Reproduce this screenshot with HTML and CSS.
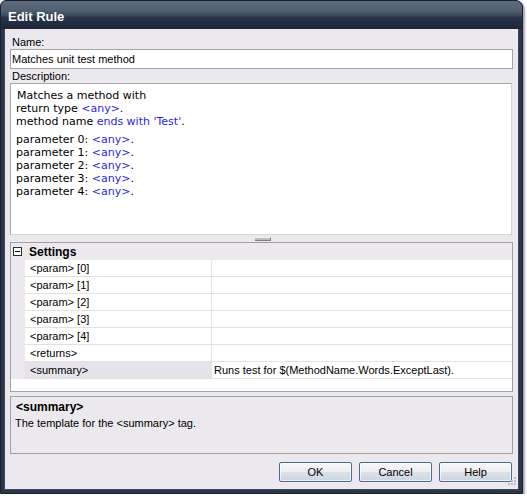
FILE: index.html
```html
<!DOCTYPE html>
<html>
<head>
<meta charset="utf-8">
<link rel="stylesheet" href="styles.css">
</head>
<body>
<div class="window">
  <div class="titlebar"><span class="title">Edit Rule</span></div>
  <div class="client">
    <div class="label">Name:</div>
    <div class="input">Matches unit test method</div>
    <div class="label label-desc">Description:</div>
    <div class="desc">
      <div class="group">
        <div class="first">Matches a method with</div>
        <div>return type <span class="kw">&lt;any&gt;</span>.</div>
        <div>method name <span class="kw">ends with 'Test'</span>.</div>
      </div>
      <div class="group group2">
        <div>parameter 0: <span class="kw">&lt;any&gt;</span>.</div>
        <div>parameter 1: <span class="kw">&lt;any&gt;</span>.</div>
        <div>parameter 2: <span class="kw">&lt;any&gt;</span>.</div>
        <div>parameter 3: <span class="kw">&lt;any&gt;</span>.</div>
        <div>parameter 4: <span class="kw">&lt;any&gt;</span>.</div>
      </div>
    </div>
    <div class="splitter"><div class="grip"></div></div>
    <div class="grid">
      <div class="cat">
        <span class="expander"><span class="minus"></span></span>
        <span class="cat-name">Settings</span>
      </div>
      <div class="row"><div class="margin"></div><div class="name">&lt;param&gt; [0]</div><div class="value"></div></div>
      <div class="row"><div class="margin"></div><div class="name">&lt;param&gt; [1]</div><div class="value"></div></div>
      <div class="row"><div class="margin"></div><div class="name">&lt;param&gt; [2]</div><div class="value"></div></div>
      <div class="row"><div class="margin"></div><div class="name">&lt;param&gt; [3]</div><div class="value"></div></div>
      <div class="row"><div class="margin"></div><div class="name">&lt;param&gt; [4]</div><div class="value"></div></div>
      <div class="row"><div class="margin"></div><div class="name">&lt;returns&gt;</div><div class="value"></div></div>
      <div class="row selected"><div class="margin"></div><div class="name">&lt;summary&gt;</div><div class="value">Runs test for $(MethodName.Words.ExceptLast).</div></div>
    </div>
    <div class="help">
      <div class="help-title">&lt;summary&gt;</div>
      <div class="help-text">The template for the &lt;summary&gt; tag.</div>
    </div>
    <div class="buttons">
      <button class="btn">OK</button>
      <button class="btn">Cancel</button>
      <button class="btn">Help</button>
    </div>
    <svg class="sizegrip" width="10" height="10" viewBox="0 0 10 10">
      <g fill="#bfbdc4">
        <rect x="8" y="0" width="2" height="2"/>
        <rect x="5" y="3" width="2" height="2"/><rect x="8" y="3" width="2" height="2"/>
        <rect x="2" y="6" width="2" height="2"/><rect x="5" y="6" width="2" height="2"/><rect x="8" y="6" width="2" height="2"/>
      </g>
    </svg>
  </div>
</div>
</body>
</html>
```

FILE: styles.css
```css
* { box-sizing: border-box; }
html, body { margin: 0; padding: 0; background: #ffffff; }
body {
  font-family: "Liberation Sans", Arial, sans-serif;
  font-size: 11px;
  color: #000;
}
.window {
  width: 523px;
  height: 494px;
  background: #2b3547;
  border-radius: 6px 7px 0 0;
  display: flex;
  flex-direction: column;
  box-shadow: 2px 2px 2px rgba(60, 60, 70, 0.45);
  border: 1px solid #1a2130;
}
.titlebar {
  height: 28px;
  flex: none;
  border-radius: 5px 6px 0 0;
  background: linear-gradient(#5d6c7c 0%, #506071 35%, #3a4859 52%, #27324a 60%, #1e2739 100%);
  display: flex;
  align-items: center;
  padding-left: 7px;
  padding-top: 2px;
}
.title {
  color: #fff;
  font-weight: bold;
  font-size: 13px;
}
.client {
  position: relative;
  flex: 1;
  margin: 0 3px 3px 3px;
  background: #ebe9ee;
  padding: 6px 5px 0 5px;
  display: flex;
  flex-direction: column;
  border: 1px solid #3e4a5e;
  border-top: none;
}
.label {
  line-height: 14px;
  height: 14px;
  padding-left: 2px;
}
.label-desc { height: 14px; line-height: 13px; padding-top: 1px; }
.input {
  height: 20px;
  background: #fff;
  border: 1px solid #a4a4a4;
  line-height: 18px;
  padding-left: 1px;
}
.desc {
  height: 152px;
  background: #fff;
  border: 1px solid #a9a9a9;
  border-right-color: #d6d6d6;
  border-bottom-color: #d6d6d6;
  padding: 5px 0 0 5px;
  font-family: "DejaVu Sans", Verdana, sans-serif;
  font-size: 11px;
  line-height: 13px;
  margin-right: 1px;
}
.desc .first { padding-left: 1px; }
.group2 { margin-top: 5px; }
.kw { color: #2727e0; }
.splitter {
  height: 7px;
  display: flex;
  justify-content: center;
  align-items: center;
}
.grip {
  width: 16px;
  height: 4px;
  background: #bdbcc2;
  border-top: 1px solid #f4f4f6;
  border-bottom: 1px solid #808080;
  border-right: 1px solid #808080;
  margin-left: 3px;
}
.grid {
  height: 150px;
  background: #fff;
  border: 1px solid #a0a0a0;
}
.cat {
  height: 17px;
  background: #ebe9ee;
  display: flex;
  align-items: center;
}
.expander {
  width: 9px;
  height: 9px;
  border: 1px solid #2d2d2d;
  background: #fff;
  margin-left: 2px;
  margin-right: 7px;
  position: relative;
  display: flex;
  align-items: center;
  justify-content: center;
}
.minus {
  width: 5px;
  height: 1px;
  background: #000;
}
.cat-name {
  font-weight: bold;
  font-size: 12px;
}
.row {
  height: 17px;
  display: flex;
}
.margin {
  width: 14px;
  background: #ebe9ee;
  flex: none;
}
.name {
  width: 187px;
  flex: none;
  border-bottom: 1px solid #e1e1e1;
  border-right: 1px solid #e6e6e6;
  line-height: 16px;
  padding-left: 5px;
}
.value {
  flex: 1;
  border-bottom: 1px solid #e1e1e1;
  line-height: 16px;
  padding-left: 2px;
}
.row.selected .name { background: #e6e4ea; }
.help {
  margin-top: 4px;
  height: 58px;
  border: 1px solid #a0a0a0;
  background: #ebe9ee;
  padding: 2px 0 0 4px;
  line-height: 16px;
}
.help-title { font-weight: bold; font-size: 12px; padding-left: 1px; }
.buttons {
  margin-top: 8px;
  display: flex;
  justify-content: flex-end;
  gap: 7px;
  padding-right: 1px;
}
.btn {
  width: 73px;
  height: 20px;
  font-family: "Liberation Sans", Arial, sans-serif;
  font-size: 11px;
  color: #000;
  border: 1px solid #4d6a91;
  border-radius: 2px;
  background: linear-gradient(#f6f7f9 0%, #eceef2 48%, #dde2e9 52%, #cdd5e0 100%);
  box-shadow: inset 0 0 0 1px rgba(255, 255, 255, 0.7);
  padding: 0;
}
.sizegrip {
  position: absolute;
  right: 2px;
  bottom: 2px;
}
```
